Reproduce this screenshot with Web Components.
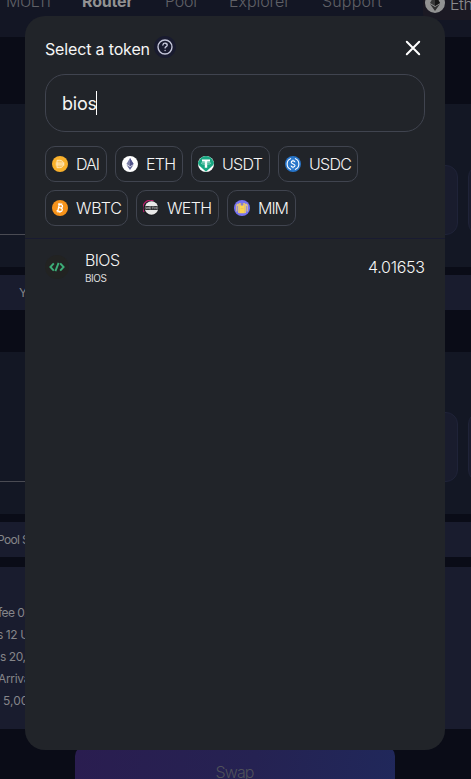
<!DOCTYPE html>
<html lang="en"><head><meta charset="utf-8"><title>Select a token</title>
<style>
html,body{margin:0;height:779px;overflow:hidden;background:#0a0c17}
body{font-family:Inter,"Liberation Sans",sans-serif;color:#f5f5f5}
</style></head><body>
<swap-page></swap-page>
<token-dialog></token-dialog>
<script>
const define=(name,html,init)=>customElements.define(name,class extends HTMLElement{
  connectedCallback(){
    if(this.shadowRoot)return;
    const t=document.createElement('template');t.innerHTML=html;
    this.attachShadow({mode:'open'}).append(t.content.cloneNode(true));
    if(init)init(this,this.shadowRoot);
  }
});

/* One line of text tracked to a given width */
define('fit-text','<style>:host{display:block;white-space:nowrap;flex:none}span{display:inline-block}</style><span><slot></slot></span>',(h,r)=>{
  const w=+h.getAttribute('w'),s=r.querySelector('span');
  h.style.width=w+'px';
  const n=h.textContent.length;
  if(n>1)s.style.letterSpacing=((w-s.getBoundingClientRect().width)/(n-1)).toFixed(3)+'px';
});

const icons={
DAI:'<circle cx="8" cy="8" r="8" fill="#f9b12c"/><path d="M5 4.3h2.8c2.2 0 3.7 1.4 3.7 3.7s-1.5 3.7-3.7 3.7H5zM3.6 7.1h8.9M3.6 8.9h8.9" fill="#fac45f" stroke="#ffe9bd" stroke-width=".9"/>',
ETH:'<circle cx="8" cy="8" r="8" fill="#fff"/><path d="M8 2L4.4 8.1 8 10.3l3.6-2.2z" fill="#7d80a8"/><path d="M8 2v8.3l3.6-2.2z" fill="#50538a"/><path d="M4.4 8.7L8 14l3.6-5.3L8 10.9z" fill="#66699a"/>',
USDT:'<circle cx="8" cy="8" r="8" fill="#fff"/><path d="M3 1.8Q8-1.6 13 1.8L15.8 6Q16.3 8 15 9.2L8 15.8.9 9.2Q-.3 8 .2 6z" fill="#19a782"/><path d="M4 3.4h8v2.2H9.2v6.2H6.8V5.6H4z" fill="#fff"/><ellipse cx="8" cy="7.2" rx="4.7" ry="1" fill="none" stroke="#d5f1e9" stroke-width=".6"/>',
USDC:'<circle cx="8" cy="8" r="8" fill="#2775ca"/><path d="M6.1 2.5a5.8 5.8 0 0 0 0 11M9.9 2.5a5.8 5.8 0 0 1 0 11" fill="none" stroke="#fff" stroke-width="1.1"/><path d="M10 6.2C9.8 4.4 6.2 4.5 6.2 6.3c0 2 3.8 1.2 3.8 3.3 0 1.9-3.8 2-4 0M8 3.7v1.2M8 11.1v1.2" fill="none" stroke="#fff" stroke-width="1.1"/>',
WBTC:'<circle cx="8" cy="8" r="8" fill="#f7931a"/><g transform="rotate(12 8 8)" fill="none" stroke="#fff"><path d="M5.2 4.5h3.3c2.2 0 2.2 3.2 0 3.2H6.5M8.5 7.8c2.8 0 2.8 3.6 0 3.6H5.2M6.5 4.5v7" stroke-width="1.3"/><path d="M7 3v1.5M8.8 3v1.5M7 11.4V13M8.8 11.4V13" stroke-width=".9"/></g>',
WETH:'<circle cx="8" cy="8" r="7.8" fill="#17191c"/><path d="M1.1 12A7.6 7.6 0 0 1 10.5.9" fill="none" stroke="#b51e69" stroke-width="1.2"/><circle cx="8.5" cy="8" r="6.7" fill="#e9e9e9"/><path d="M2.2 6h12.6v4H2.2z" fill="#303134"/><path d="M3 6.9l.7 2 .7-1.5.7 1.5.6-2M8 6.9H6.4v2H8M6.4 7.9h1.4M8.7 7h2.3M9.8 7v2.2M11.8 6.7v2.5M13.7 6.7v2.5M11.8 7.9h1.9" fill="none" stroke="#ccc" stroke-width=".5"/>',
MIM:'<circle cx="8" cy="8" r="8" fill="#7773f2"/><path d="M2.2 5Q3.8 2 5.2 4.6V13H4V6H3.4v5.6H2.2zM13.8 5Q12.2 2 10.8 4.6V13H12V6h.6v5.6h1.2z" fill="#dcc184"/><path d="M5.2 3h1.6v2.6h2.4V3h1.6v10.2H5.2z" fill="#fbd34f"/><path d="M6.8 3h2.4v2H6.8z" fill="#8a7dc0"/><path d="M6.6 8h2.8v.8H6.6z" fill="#e8bc55"/>'
};
define('token-chip',`<style>:host{display:flex;box-sizing:border-box;height:36px;border:1px solid #40444f;border-radius:10px;align-items:center;padding-left:6px;gap:8px;font-size:16px;font-weight:300;line-height:20px;flex:none}svg{width:16px;height:16px;flex:none}</style><svg viewBox="0 0 16 16"></svg><slot></slot>`,(h,r)=>{
  r.querySelector('svg').innerHTML=icons[h.getAttribute('icon')];h.style.width=h.getAttribute('width')+'px';
});

define('page-card',`<style>:host{display:flex;justify-content:space-between;box-sizing:border-box;height:163px;background:#131724;padding-top:61px}
.line{width:200px;height:69px;border-bottom:1px solid #4a4b53}.boxes{display:flex;gap:10px;margin-right:-97px}.box{box-sizing:border-box;width:100px;height:70px;background:#191c2d;border:1px solid #1f2338;border-radius:12px}</style>
<div class="line"></div><div class="boxes"><div class="box"></div><div class="box"></div></div>`);

define('nav-bar',`<style>:host{display:block;height:37px;background:#131624;overflow:hidden}.row{display:flex;margin-top:-9px;height:20px;line-height:20px;font-size:16px;font-weight:300;color:#606167;padding-left:6px}
.on{font-weight:700;color:#929292;margin-left:31px}.net{display:flex;gap:5px;align-items:center;margin:-4px 0 0 41px;padding-left:2px;height:33px;background:#1b1923;color:#8b8b8e;margin-right:-20px;border-radius:0 0 0 6px}svg{width:20px;height:20px;display:block;flex:none;margin-top:-1px}</style>
<div class="row"><fit-text w="45">MULTI</fit-text><fit-text class="on" w="51">Router</fit-text><fit-text style="margin-left:32px" w="32">Pool</fit-text><fit-text style="margin-left:32px" w="61">Explorer</fit-text><fit-text style="margin-left:32px" w="60">Support</fit-text>
<div class="net"><svg viewBox="0 0 20 20"><circle cx="10" cy="10" r="10" fill="#929292"/><path d="M10 1L5 10l5 3 5-3z" fill="#393939"/><path d="M10 1v12l5-3z" fill="#151515"/><path d="M5 11l5 7 5-7-5 3z" fill="#303030"/></svg><fit-text w="68">Ethereum</fit-text></div></div>`);

define('swap-page',`<style>:host{display:block;height:779px;overflow:hidden;background:#0a0c17;font-size:12px;color:#858589;font-weight:400}
.bar{box-sizing:border-box;height:35px;background:#191c2e;display:flex;align-items:center;padding-left:19px}
.panel{box-sizing:border-box;height:162px;background:#191c2e;padding-top:35px;margin-top:10px;line-height:22px}
.swap{box-sizing:border-box;width:320px;height:60px;margin:17px auto 0 75px;border-radius:10px;background:linear-gradient(100deg,#2a1d50,#252252 55%,#20285b);font-size:16px;font-weight:300;color:#50515a;display:flex;justify-content:center;padding-top:16px;line-height:20px}</style>
<nav-bar></nav-bar><page-card style="margin-top:67px"></page-card>
<div class="bar" style="margin-top:8px"><fit-text w="22">You</fit-text></div>
<page-card style="margin-top:42px;height:162px;padding-top:60px"></page-card>
<div class="bar" style="margin-top:8px;padding:0"><fit-text style="margin-left:-3px" w="50">Pool Size:</fit-text></div>
<div class="panel"><fit-text style="margin-left:-2px" w="44">fee 0.1%</fit-text><fit-text style="margin-left:-3px" w="56">s 12 USDC</fit-text><fit-text style="margin-left:0" w="47">s 20,000</fit-text><fit-text style="margin-left:-2px" w="35">Arrival</fit-text><fit-text style="margin-left:3px" w="33">5,000</fit-text></div>
<div class="swap"><fit-text w="39">Swap</fit-text></div>`);

define('token-dialog',`<style>:host{position:absolute;box-sizing:border-box;left:25px;top:16px;width:420px;height:734px;border-radius:20px;background:#212429;overflow:hidden;display:block}
header{display:flex;padding:20px 24px 0 20px;height:38px;box-sizing:content-box;font-size:16px;line-height:26px}
.help{width:22px;height:22px;margin-left:4px}.close{width:16px;height:16px;margin:4px 0 0 auto}svg{display:block}
.search{box-sizing:border-box;width:380px;height:58px;border:1px solid #40444f;border-radius:20px;margin:0 20px;padding-left:16px;display:flex;align-items:center;font-size:18px}
.caret{width:1px;height:24px;background:#fff;margin-left:-1px}
.chips{display:flex;flex-wrap:wrap;gap:8px;padding:14px 20px 12px;border-bottom:1px solid #191b31}
.row{display:flex;align-items:center;height:56px;padding:0 20px;font-size:16px;font-weight:300}
.names{margin-left:16px;height:36px;padding-top:1px;box-sizing:border-box}.names .a{line-height:20px}.names .b{font-size:10px;line-height:17px;font-weight:400;color:#ddd}</style>
<header><fit-text w="105">Select a token</fit-text><svg class="help" viewBox="0 0 22 22"><circle cx="11" cy="11" r="11" fill="#191b2f"/><g fill="none" stroke="#c3c5d8" stroke-width="1.4" stroke-linecap="round"><circle cx="11" cy="11" r="7"/><path d="M8.9 9c.5-2.8 4.5-2.1 4.3.2 0 1.3-2.1 1.6-2.1 2.7M11.1 14.4v.1"/></g></svg>
<svg class="close" viewBox="0 0 16 16"><path d="M1.8 1.8l12.4 12.4M14.2 1.8L1.8 14.2" stroke="#fff" stroke-width="2" stroke-linecap="round"/></svg></header>
<div class="search"><fit-text w="35">bios</fit-text><div class="caret"></div></div>
<div class="chips">
<token-chip icon="DAI" width="62"><fit-text w="24">DAI</fit-text></token-chip><token-chip icon="ETH" width="68"><fit-text w="30">ETH</fit-text></token-chip><token-chip icon="USDT" width="79"><fit-text w="41">USDT</fit-text></token-chip><token-chip icon="USDC" width="80"><fit-text w="43">USDC</fit-text></token-chip>
<token-chip icon="WBTC" width="83"><fit-text w="46">WBTC</fit-text></token-chip><token-chip icon="WETH" width="83"><fit-text w="45">WETH</fit-text></token-chip><token-chip icon="MIM" width="69"><fit-text w="31">MIM</fit-text></token-chip></div>
<div class="row"><svg width="24" height="24" viewBox="0 0 24 24"><circle cx="12" cy="12" r="12" fill="#222322"/><path d="M8.8 8.3L5.4 12l3.4 3.7M15.2 8.3L18.6 12l-3.4 3.7M13.6 7.8l-3.2 8.4" fill="none" stroke="#3dae78" stroke-width="1.9"/></svg>
<div class="names"><fit-text class="a" w="35">BIOS</fit-text><fit-text class="b" w="22">BIOS</fit-text></div><fit-text style="margin-left:auto" w="57">4.01653</fit-text></div>`);
</script></body></html>
